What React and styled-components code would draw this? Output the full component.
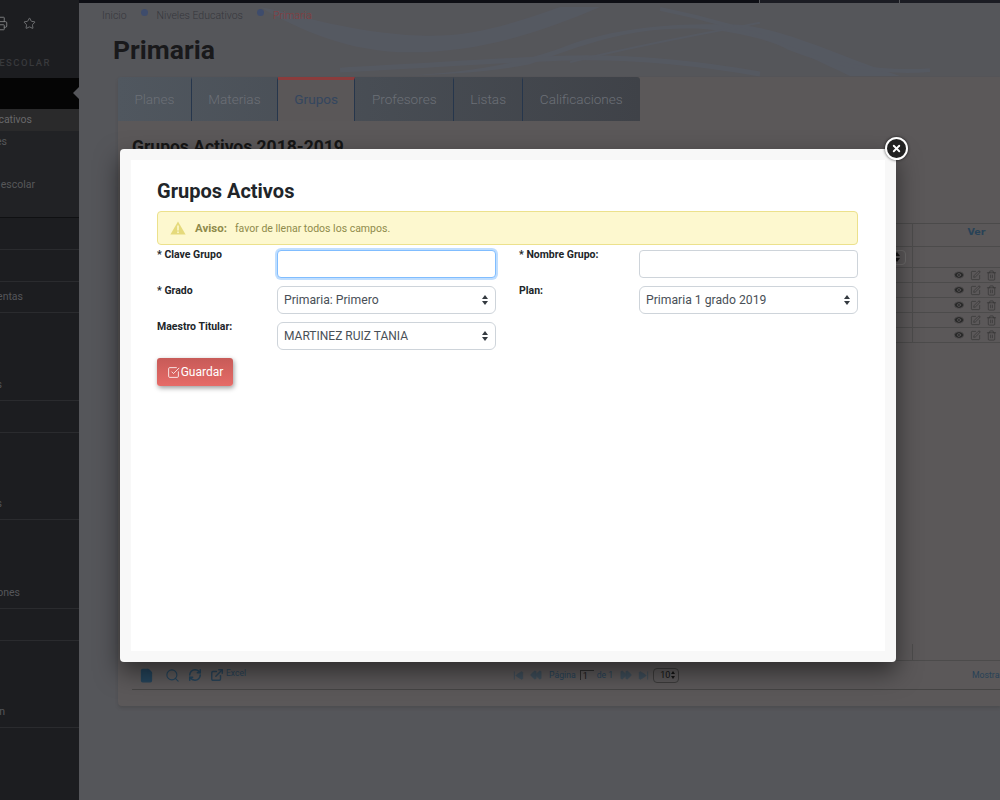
import React from 'react';
import styled, { createGlobalStyle } from 'styled-components';
import {
  Printer, Star, File, Search, RefreshCw, ExternalLink, SkipBack, SkipForward,
  Rewind, FastForward, Eye, SquarePen, Trash2, X, SquareCheckBig,
} from 'lucide-react';

const TABS = ['Planes', 'Materias', 'Grupos', 'Profesores', 'Listas', 'Calificaciones'];

// sidebar is scrolled off to the left, only the end of each label shows
const SUB_ITEMS = [
  { label: 'Niveles Educativos', end: 47, active: true },
  { label: 'Planes', end: 72 },
  { label: '', end: 0 },
  { label: 'Ciclo escolar', end: 44 },
  { label: '', end: 0 },
];

const MENU_ITEMS = [
  { label: '', end: 0, h: 32 },
  { label: '', end: 0, h: 32 },
  { label: 'Herramientas', end: 56, h: 31 },
  { label: 'Reportes', end: 77, h: 88 },
  { label: '', end: 0, h: 32 },
  { label: 'Alumnos', end: 77, h: 87 },
  { label: 'Inscripciones', end: 59, h: 89 },
  { label: '', end: 0, h: 32 },
  { label: 'Administración', end: 74, h: 87 },
];

export default function App() {
  return (
    <>
      <GlobalStyle />
      <Page>
        <Sidebar>
          <SideIcons>
            <Printer size={15} strokeWidth={1.5} />
            <Star size={13} strokeWidth={1.5} />
          </SideIcons>
          <SideSection>ESCOLAR</SideSection>
          <SideActive />
          <SubMenu>
            {SUB_ITEMS.map((item, i) => (
              <SubItem key={i} $end={item.end} $active={item.active}>{item.label}</SubItem>
            ))}
          </SubMenu>
          {MENU_ITEMS.map((item, i) => (
            <MenuItem key={i} $end={item.end} $h={item.h}>{item.label}</MenuItem>
          ))}
        </Sidebar>

        <Main>
          <TopBar>
            <TopSegment $w={680} />
            <TopSegment $w={139} />
            <TopSegment $w={101} />
          </TopBar>
          <Header>
            <Waves viewBox="79 0 921 75" preserveAspectRatio="none">
              <path d="M260 4 C300 12 350 30 420 33 C470 35 510 22 560 4 L600 4 C540 30 480 50 410 50 C350 50 300 28 260 4Z" fill="#566072" />
              <path d="M400 74 C470 70 520 62 570 42 C620 25 670 20 740 22 C790 28 830 50 900 74 L850 74 C800 50 760 30 700 26 C630 24 590 40 530 62 C490 70 450 72 400 74Z" fill="#566072" />
              <path d="M340 68 C420 64 500 58 560 56 C620 54 680 58 760 72" fill="none" stroke="#566072" strokeWidth="5" />
              <path d="M660 6 C700 14 760 30 790 46 C830 62 880 72 930 68" fill="none" stroke="#566072" strokeWidth="4" />
              <path d="M570 60 C640 42 710 30 760 20" fill="none" stroke="#566072" strokeWidth="2" />
            </Waves>
            <Breadcrumb>
              <Crumb>Inicio</Crumb>
              <Bullet />
              <Crumb>Niveles Educativos</Crumb>
              <Bullet />
              <Crumb $current>Primaria</Crumb>
            </Breadcrumb>
            <PageTitle>Primaria</PageTitle>
          </Header>

          <Card>
            <TabBar>
              {TABS.map((tab) => (
                <Tab key={tab} $active={tab === 'Grupos'}>{tab}</Tab>
              ))}
            </TabBar>
            <CardBody>
              <CardHeading>Grupos Activos 2018-2019</CardHeading>
              <Table>
                <TableRow $h={23}>
                  <Cell />
                  <VerHead>Ver</VerHead>
                </TableRow>
                <TableRow $h={21}>
                  <FilterCell><FilterSelect><Arrows $color="#141414" $right={4} /></FilterSelect></FilterCell>
                  <Cell />
                </TableRow>
                {[0, 1, 2, 3, 4].map((n) => (
                  <TableRow key={n} $h={15}>
                    <Cell />
                    <ActionCell>
                      <Eye size={12} fill="#2a2a2a" stroke="#5b5859" strokeWidth={1.5} />
                      <SquarePen size={11} strokeWidth={1.2} />
                      <Trash2 size={11} strokeWidth={1.2} />
                    </ActionCell>
                  </TableRow>
                ))}
                <TableSpacer />
                <TableRow $h={17}>
                  <Cell />
                  <Cell />
                </TableRow>
              </Table>
              <Toolbar>
                <ToolGroup>
                  <FileIcon size={15} fill="#24435a" stroke="#24435a" />
                  <Search size={15} strokeWidth={1.8} />
                  <RefreshCw size={14} strokeWidth={2.6} />
                  <ExportLink><ExternalLink size={14} strokeWidth={2.4} />Excel</ExportLink>
                </ToolGroup>
                <Pager>
                  <SkipBack size={11} fill="#3f4e5a" stroke="#3f4e5a" />
                  <Rewind size={12} fill="#3f4e5a" stroke="#3f4e5a" />
                  <PagerText $mx={1}>Página</PagerText>
                  <PageInput>1</PageInput>
                  <PagerText>de 1</PagerText>
                  <FastForward size={12} fill="#3f4e5a" stroke="#3f4e5a" />
                  <SkipForward size={11} fill="#3f4e5a" stroke="#3f4e5a" />
                  <PageSize>10<Arrows $color="#141414" $right={1} $small /></PageSize>
                </Pager>
                <PagerText>Mostrando</PagerText>
              </Toolbar>
            </CardBody>
          </Card>
        </Main>

        <Modal>
          <CloseButton><X size={11} strokeWidth={4} /></CloseButton>
          <ModalInner>
            <ModalTitle>Grupos Activos</ModalTitle>
            <Alert>
              <WarnIcon viewBox="0 0 16 14">
                <path d="M8 0.5 L15.6 13.5 L0.4 13.5 Z" fill="#e5da7c" />
                <rect x="7.2" y="4.5" width="1.6" height="5" fill="#fdf8cf" />
                <rect x="7.2" y="10.5" width="1.6" height="1.6" fill="#fdf8cf" />
              </WarnIcon>
              <AlertLabel>Aviso:</AlertLabel>
              <AlertText>favor de llenar todos los campos.</AlertText>
            </Alert>
            <Form>
              <Field>
                <Label>* Clave Grupo</Label>
                <TextInput $focused />
              </Field>
              <Field>
                <Label>* Nombre Grupo:</Label>
                <TextInput />
              </Field>
              <Field>
                <Label>* Grado</Label>
                <SelectBox $size={12.2}>Primaria: Primero<Arrows $color="#343a40" $right={6} /></SelectBox>
              </Field>
              <Field>
                <Label>Plan:</Label>
                <SelectBox $size={12.2}>Primaria 1 grado 2019<Arrows $color="#343a40" $right={6} /></SelectBox>
              </Field>
              <Field>
                <Label>Maestro Titular:</Label>
                <SelectBox $size={12}>MARTINEZ RUIZ TANIA<Arrows $color="#343a40" $right={6} /></SelectBox>
              </Field>
            </Form>
            <SaveButton><SquareCheckBig size={13} strokeWidth={1.5} />Guardar</SaveButton>
          </ModalInner>
        </Modal>
      </Page>
    </>
  );
}

const GlobalStyle = createGlobalStyle`
  html, body {
    margin: 0;
    height: 100%;
    overflow: hidden;
    background: #55565a;
    font-family: Roboto, "Liberation Sans", sans-serif;
  }
`;

const Page = styled.div`
  position: relative;
  display: flex;
  width: 1000px;
  height: 800px;
  overflow: hidden;
`;

const Sidebar = styled.aside`
  width: 79px;
  flex: none;
  background: #1c1d20;
  overflow: hidden;
`;

const SideIcons = styled.div`
  height: 46px;
  display: flex;
  align-items: center;
  gap: 15px;
  margin-left: -7px;
  color: #7f8082;
`;

const SideSection = styled.div`
  height: 32px;
  display: flex;
  align-items: center;
  justify-content: flex-end;
  padding-right: 28px;
  font-size: 9.5px;
  font-weight: 500;
  letter-spacing: 1.5px;
  color: #38393c;
`;

const SideActive = styled.div`
  position: relative;
  height: 31px;
  background: #050505;

  &::after {
    content: '';
    position: absolute;
    right: 0;
    top: 9px;
    border: 6px solid transparent;
    border-right-color: #55565a;
    border-left-width: 0;
  }
`;

const SubMenu = styled.div`
  border-bottom: 1px solid #0f1012;
  background: #212225;
`;

const SubItem = styled.div`
  height: 21.6px;
  display: flex;
  align-items: center;
  justify-content: flex-end;
  padding-right: ${({ $end }) => $end}px;
  white-space: nowrap;
  font-size: 10.5px;
  color: ${({ $active }) => ($active ? '#68686a' : '#57585a')};
  background: ${({ $active }) => ($active ? '#2a2a2b' : 'transparent')};
`;

const MenuItem = styled.div`
  box-sizing: border-box;
  height: ${({ $h }) => $h}px;
  display: flex;
  align-items: flex-end;
  justify-content: flex-end;
  padding: 0 ${({ $end }) => $end}px 9px 0;
  border-bottom: 1px solid #2a2b2e;
  white-space: nowrap;
  font-size: 10.5px;
  line-height: 13px;
  color: #55565a;
`;

const Main = styled.main`
  flex: 1;
  min-width: 0;
  display: flex;
  flex-direction: column;
`;

const TopBar = styled.div`
  height: 3px;
  display: flex;
  gap: 1px;
  background: #55565a;
`;

const TopSegment = styled.div`
  width: ${({ $w }) => $w}px;
  flex: none;
  background: ${({ $w }) => ($w > 200 ? '#0e0f15' : '#1b1c23')};
`;

const Header = styled.header`
  position: relative;
  height: 74px;
  flex: none;
`;

const Waves = styled.svg`
  position: absolute;
  inset: 0;
  width: 100%;
  height: 100%;
  opacity: 0.3;
`;

const Breadcrumb = styled.nav`
  position: relative;
  display: flex;
  align-items: center;
  gap: 9px;
  height: 24px;
  padding-left: 23px;
`;

const Crumb = styled.span`
  font-size: 10.5px;
  font-weight: 300;
  color: ${({ $current }) => ($current ? '#8a3a3c' : '#35373d')};
`;

const Bullet = styled.span`
  width: 7px;
  height: 7px;
  margin: -5px 0 0 5px;
  border-radius: 50%;
  background: #3e4c6c;
`;

const PageTitle = styled.h1`
  position: relative;
  margin: 7px 0 0 34px;
  font-size: 26.5px;
  line-height: 32px;
  font-weight: 700;
  color: #19191b;
`;

const Card = styled.section`
  width: 882px;
  height: 629px;
  margin-left: 39px;
  flex: none;
  display: flex;
  flex-direction: column;
  background: #5b5859;
  border-radius: 4px 0 0 4px;
  box-shadow: 0 2px 3px rgba(60, 60, 60, 0.35);
`;

const TabBar = styled.div`
  display: flex;
  width: 522px;
  height: 44px;
  flex: none;
  border-radius: 3px 3px 0 0;
  overflow: hidden;
  background: linear-gradient(90deg, #50575f, #3f4248);
`;

const Tab = styled.div`
  display: flex;
  align-items: center;
  padding: 0 16.4px 3px;
  font-size: 13.6px;
  font-weight: ${({ $active }) => ($active ? 400 : 300)};
  border-right: 1px solid #26364c;
  border-top: 3px solid ${({ $active }) => ($active ? '#8a3c3c' : 'transparent')};
  color: ${({ $active }) => ($active ? '#34465f' : '#6c7077')};
  background: ${({ $active }) => ($active ? '#5a5758' : 'transparent')};

  &:last-child {
    border-right: 0;
  }
`;

const CardBody = styled.div`
  flex: 1;
  min-height: 0;
  display: flex;
  flex-direction: column;
  padding: 15px 0 16px 14px;
`;

const CardHeading = styled.h2`
  margin: 0;
  font-size: 17.5px;
  line-height: 22px;
  font-weight: 700;
  color: #161616;
`;

const Table = styled.div`
  flex: 1;
  min-height: 0;
  display: flex;
  flex-direction: column;
  margin-top: 65px;
  border-top: 1px solid #4b4a4a;
`;

const TableRow = styled.div`
  display: grid;
  grid-template-columns: 780px 1fr;
  height: ${({ $h }) => $h}px;
  flex: none;
  box-sizing: border-box;
  border-bottom: 1px solid #4c4b4b;
`;

const TableSpacer = styled.div`
  flex: 1;
`;

const Cell = styled.div`
  & + & {
    border-left: 1px solid #4c4b4b;
  }
`;

const VerHead = styled(Cell)`
  display: flex;
  align-items: center;
  justify-content: center;
  padding: 0 0 7px 40px;
  font-family: "DejaVu Sans", sans-serif;
  font-size: 9.5px;
  font-weight: 700;
  color: #284257;
  border-left: 1px solid #4c4b4b;
`;

const FilterCell = styled(Cell)`
  display: flex;
  align-items: center;
  justify-content: flex-end;
  padding-right: 6px;
`;

const Arrows = styled.span`
  position: absolute;
  right: ${({ $right }) => $right}px;
  top: 50%;
  width: 7px;
  height: ${({ $small }) => ($small ? 8 : 10)}px;
  margin-top: ${({ $small }) => ($small ? -4 : -5)}px;

  &::before,
  &::after {
    content: '';
    position: absolute;
    left: ${({ $small }) => ($small ? 1 : 0)}px;
    border-left: ${({ $small }) => ($small ? 2.5 : 3.5)}px solid transparent;
    border-right: ${({ $small }) => ($small ? 2.5 : 3.5)}px solid transparent;
  }

  &::before {
    top: 0;
    border-bottom: ${({ $small }) => ($small ? 3 : 4)}px solid ${({ $color }) => $color};
  }

  &::after {
    bottom: 0;
    border-top: ${({ $small }) => ($small ? 3 : 4)}px solid ${({ $color }) => $color};
  }
`;

const FilterSelect = styled.div`
  position: relative;
  width: 30px;
  height: 15px;
  box-sizing: border-box;
  border: 1px solid #6c6a6a;
  border-radius: 4px;
`;

const ActionCell = styled(Cell)`
  display: flex;
  align-items: center;
  justify-content: flex-end;
  gap: 5px;
  padding-right: 3px;
  color: #2c2c2c;
  border-left: 1px solid #4c4b4b;
`;

const Toolbar = styled.div`
  height: 28px;
  flex: none;
  display: grid;
  grid-template-columns: 381px 459px 1fr;
  align-items: center;
  border-bottom: 1px solid #454444;
  color: #24435a;
  white-space: nowrap;
`;

const ToolGroup = styled.div`
  display: flex;
  align-items: center;
  gap: 8px;
  padding-left: 7px;
`;

const FileIcon = styled(File)`
  margin-right: 3px;
`;

const ExportLink = styled.span`
  display: flex;
  align-items: flex-start;
  gap: 2px;
  font-size: 8.5px;
  color: #284257;
`;

const Pager = styled.div`
  display: flex;
  align-items: center;
  gap: 6px;
  color: #3f4e5a;

  svg:nth-of-type(3) {
    margin-left: 1px;
  }
`;

const PagerText = styled.span`
  margin-left: ${({ $mx }) => $mx || 0}px;
  font-size: 8.7px;
  color: #284257;
`;

const PageInput = styled.span`
  width: 14px;
  height: 10px;
  margin: 0 -3px 0 -2px;
  box-sizing: border-box;
  border-top: 1px solid #2e2e2e;
  border-left: 1px solid #2e2e2e;
  font-size: 9px;
  line-height: 10px;
  padding-left: 2px;
  color: #1a1a1a;
`;

const PageSize = styled.span`
  position: relative;
  width: 26px;
  height: 15px;
  box-sizing: border-box;
  margin-left: -2px;
  padding-left: 6px;
  display: flex;
  align-items: center;
  border: 1px solid #3c3b3b;
  border-radius: 4px;
  font-size: 9px;
  color: #141414;
`;

const Modal = styled.div`
  position: absolute;
  left: 120px;
  top: 149px;
  width: 776px;
  height: 513px;
  box-sizing: border-box;
  padding: 11px;
  display: flex;
  background: #f8f8f8;
  border-radius: 4px;
  box-shadow: 0 10px 25px rgba(0, 0, 0, 0.5);
`;

const CloseButton = styled.button`
  position: absolute;
  top: -12px;
  right: -12px;
  width: 23px;
  height: 23px;
  padding: 0;
  display: flex;
  align-items: center;
  justify-content: center;
  box-sizing: border-box;
  border: 2px solid #fff;
  border-radius: 50%;
  background: #222;
  color: #fff;
  box-shadow: 0 0 3px rgba(0, 0, 0, 0.7);
`;

const ModalInner = styled.div`
  flex: 1;
  padding: 19px 27px 0 26px;
  background: #fff;
`;

const ModalTitle = styled.h2`
  margin: 0;
  font-size: 20px;
  line-height: 24px;
  font-weight: 700;
  color: #212529;
`;

const Alert = styled.div`
  box-sizing: border-box;
  height: 34px;
  margin-top: 8px;
  display: flex;
  align-items: center;
  padding-left: 12px;
  background: #fdf8cf;
  border: 1px solid #ece18c;
  border-radius: 4px;
`;

const WarnIcon = styled.svg`
  width: 16px;
  height: 14px;
  flex: none;
`;

const AlertLabel = styled.strong`
  margin-left: 9px;
  font-size: 11.5px;
  font-weight: 700;
  color: #8f8b4b;
`;

const AlertText = styled.span`
  margin-left: 8px;
  font-size: 10.5px;
  color: #8f8b4b;
`;

const Form = styled.div`
  display: grid;
  grid-template-columns: 339px 339px;
  column-gap: 23px;
  row-gap: 8px;
  margin-top: 5px;
`;

const Field = styled.div`
  display: flex;
  align-items: flex-start;
`;

const Label = styled.label`
  width: 120px;
  flex: none;
  margin-top: -1px;
  font-size: 10.5px;
  line-height: 12px;
  font-weight: 700;
  color: #212529;
`;

const TextInput = styled.input`
  width: 219px;
  height: 28px;
  box-sizing: border-box;
  padding: 0 7px;
  outline: none;
  background: #fff;
  border: 1px solid ${({ $focused }) => ($focused ? '#80bdff' : '#ced4da')};
  border-radius: 4px;
  box-shadow: ${({ $focused }) => ($focused ? '0 0 0 2px rgba(0, 123, 255, 0.25)' : 'none')};
`;

const SelectBox = styled.div`
  position: relative;
  width: 219px;
  height: 28px;
  box-sizing: border-box;
  padding: 0 0 1px 6px;
  display: flex;
  align-items: center;
  border: 1px solid #ced4da;
  border-radius: 6px;
  font-size: ${({ $size }) => $size}px;
  color: #495057;
  background: #fff;
`;

const SaveButton = styled.button`
  width: 76px;
  height: 28px;
  margin-top: 8px;
  padding: 0;
  display: flex;
  align-items: center;
  justify-content: center;
  gap: 1px;
  border: 0;
  border-radius: 3px;
  background: linear-gradient(#c75b58, #e66b67);
  box-shadow: 1px 2px 5px rgba(0, 0, 0, 0.4);
  color: #fff;
  font-family: Roboto, sans-serif;
  font-size: 12px;
`;
